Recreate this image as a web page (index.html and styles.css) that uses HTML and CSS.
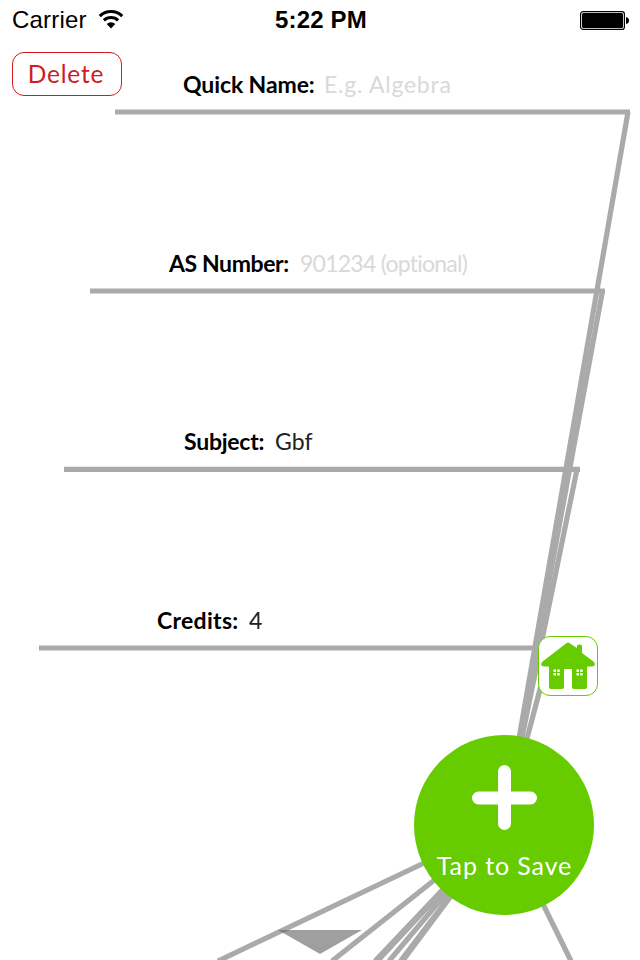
FILE: index.html
```html
<!DOCTYPE html>
<html lang="en">
<head>
<meta charset="utf-8">
<title>Edit Standard</title>
<link rel="stylesheet" href="styles.css">
</head>
<body>
<svg class="web" viewBox="0 0 640 960" aria-hidden="true">
  <g fill="none" stroke="#aaa" stroke-width="5.2">
    <path d="M115 112H630M628 112L504 825"/>
    <path d="M90 291H605M602.5 291L504 825"/>
    <path d="M64 469.3H580M577 469.3L504 825"/>
    <path d="M39 648H551L504 825"/>
    <path d="M504 825L218 961M504 825L332 961M504 825L375 961M504 825L377.500 961M504 825L389 961M504 825L400.500 961M504 825L402.500 961M504 825L571 961"/>
  </g>
  <path d="M278 930H362L320 954Z" fill="#5f5f5f" fill-opacity=".6"/>
</svg>
<header class="status">
  <div class="carrier"><span>Carrier</span>
    <svg class="wifi" width="26" height="20" viewBox="0 0 26 20"><g fill="none" stroke="#000" stroke-width="3.100"><path d="M1.800 7.100A16 16 0 0 1 24.200 7.100"/><path d="M5.900 11.400A10.200 10.200 0 0 1 20.100 11.400"/></g><path d="M8.700 15A6.100 6.100 0 0 1 17.300 15L13 19.500Z"/></svg>
  </div>
  <div class="clock">5:22 PM</div>
  <svg class="battery" width="50" height="20" viewBox="0 0 50 20"><rect x=".6" y=".6" width="43.800" height="17.800" rx="2.500" fill="none" stroke="#000" stroke-width="1.200"/><rect x="2" y="2" width="41" height="15" rx="1.500"/><path d="M46 6Q49 6.500 49 9.500T46 13Z"/></svg>
</header>
<button class="delete">Delete</button>
<main class="fields">
  <div class="field quick"><span class="label">Quick Name:</span><span class="hint">E.g. Algebra</span></div>
  <div class="field number"><span class="label">AS Number:</span><span class="hint">901234 (optional)</span></div>
  <div class="field subject"><span class="label">Subject:</span><span class="value">Gbf</span></div>
  <div class="field credits"><span class="label">Credits:</span><span class="value">4</span></div>
</main>
<button class="home" aria-label="Home">
  <svg width="60" height="60" viewBox="0 0 60 60" fill="#6c0"><path d="M28 7.500Q30 5.500 32 7.500L39 12V9.500Q41.500 7.500 44 9.500V17L56 26Q58.500 30 54 30.500H49V51Q49 53 47 53H36Q34 53 34 51V34Q34 33 33 33H27Q26 33 26 34V51Q26 53 24 53H13Q11 53 11 51V30.500H6Q1.500 30 4 26Z"/><path fill="#fff" d="M15.500 33.500h2.500v2.500h-2.500zM19.200 33.500h2.500v2.500h-2.500zM15.500 37h2.500v2.500h-2.500zM19.200 37h2.500v2.500h-2.500zM38.500 33.500h2.500v2.500h-2.500zM42.200 33.500h2.500v2.500h-2.500zM38.500 37h2.500v2.500h-2.500zM42.200 37h2.500v2.500h-2.500z"/></svg>
</button>
<button class="save">
  <svg width="66" height="66" viewBox="0 0 66 66"><path d="M33.500 6.500V58.500M7.500 33H59.500" stroke="#fff" stroke-width="13" stroke-linecap="round"/></svg>
  <span>Tap to Save</span>
</button>
</body>
</html>
```
FILE: styles.css
```css
* { box-sizing: border-box; }
body { margin: 0; width: 640px; height: 960px; overflow: hidden; position: relative; background: #fff; font-family: Lato, sans-serif; font-variant-ligatures: none; color: #000; }
button { padding: 0; font-family: inherit; }
.web { position: absolute; inset: 0; width: 640px; height: 960px; z-index: -1; }
.status { height: 40px; display: grid; grid-template-columns: 1fr auto 1fr; align-items: center; padding: 0 10px 0 12px; font-family: "Liberation Sans", sans-serif; }
.carrier { display: flex; align-items: center; gap: 11px; font-size: 24px; line-height: 40px; letter-spacing: .2px; }
.wifi { margin-top: -2px; }
.clock { font-size: 24px; line-height: 40px; font-weight: bold; letter-spacing: .15px; }
.battery { justify-self: end; margin-top: 1px; }
.delete { display: block; margin: 12px 0 0 12px; width: 110px; height: 44px; padding: 0 2px 2px 0; border: 1.5px solid #d01c1f; border-radius: 12px; background: #fff; color: #d01c1f; font-size: 24.5px; letter-spacing: .8px; }
.fields { margin-top: -27px; display: grid; grid-template-rows: repeat(4, 178.600px); }
.field { display: flex; align-items: flex-start; font-size: 23px; line-height: 30px; white-space: nowrap; }
.label { font-weight: bold; }
.hint { color: #d9d9d9; }
.value { color: #222; }
.quick { padding-left: 183px; }
.quick .label { width: 141px; letter-spacing: -.1px; }
.quick .hint { letter-spacing: .75px; }
.number { padding-left: 169px; }
.number .label { width: 131px; letter-spacing: -.4px; }
.number .hint { letter-spacing: -.75px; }
.subject { padding-left: 184px; }
.subject .label { width: 91px; letter-spacing: -.25px; }
.credits { padding-left: 157px; }
.credits .label { width: 92px; letter-spacing: .3px; }
.home { position: absolute; left: 538px; top: 636px; width: 60px; height: 60px; border: 1.5px solid #6c0; border-radius: 12px; background: #fff; }
.home svg { display: block; margin: -1px; }
.save { position: absolute; left: 414px; top: 735px; width: 180px; height: 180px; border: 0; border-radius: 50%; background: #6c0; color: #fff; display: flex; flex-direction: column; align-items: center; padding-top: 30px; font-size: 25px; line-height: 30px; }
.save span { margin-top: 19px; padding-left: 1px; white-space: nowrap; letter-spacing: .9px; }
```
